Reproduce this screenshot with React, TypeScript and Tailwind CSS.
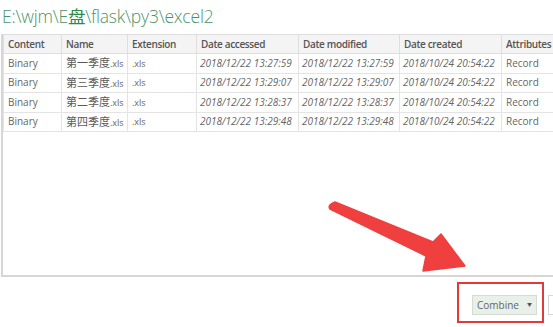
import React from "react";

const rows = [
  ["第一季度", "2018/12/22 13:27:59"],
  ["第三季度", "2018/12/22 13:29:07"],
  ["第二季度", "2018/12/22 13:28:37"],
  ["第四季度", "2018/12/22 13:29:48"],
];

const font = { fontFamily: '"Open Sans", "Noto Sans CJK SC", sans-serif' };

export default function App() {
  return (
    <div className="relative w-[553px] h-[327px] bg-white overflow-hidden" style={font}>
      <div className="h-[34px] pl-[2px] pt-[4px] text-[17.5px] font-light leading-[24px] text-[#4b946a] tracking-[-0.2px] whitespace-nowrap">
        E:\wjm\E<span className="text-[#2f8a4a] font-normal">盘</span>\flask\py3\excel2
      </div>
      <div className="ml-[1px] h-[243px] border-l-2 border-b-2 border-[#d6d6d6] overflow-hidden">
        <table className="border-collapse table-fixed text-[10px] text-[#666] w-[580px]">
          <colgroup>
            <col className="w-[58px]" />
            <col className="w-[66px]" />
            <col className="w-[69px]" />
            <col className="w-[102px]" />
            <col className="w-[101px]" />
            <col className="w-[102px]" />
            <col className="w-[82px]" />
          </colgroup>
          <thead>
            <tr className="h-[19px] bg-[#f4f4f4] text-[#555] font-semibold tracking-[-0.35px]">
              {["Content", "Name", "Extension", "Date accessed", "Date modified", "Date created", "Attributes"].map((h) => (
                <td key={h} className="border border-[#dedede] px-[4px] py-0 whitespace-nowrap text-left leading-[18px]">
                  {h}
                </td>
              ))}
            </tr>
          </thead>
          <tbody>
            {rows.map(([n, d]) => (
              <tr key={n} className="h-[19.5px]">
                <td className="border border-[#e4e4e4] px-[4px] whitespace-nowrap">Binary</td>
                <td className="border border-[#e4e4e4] px-[4px] whitespace-nowrap">
                  <span className="text-[11px] text-[#5a5a5a]">{n}</span>
                  <span className="text-[9px]">.xls</span>
                </td>
                <td className="border border-[#e4e4e4] px-[4px] whitespace-nowrap text-[9px]">.xls</td>
                <td className="border border-[#e4e4e4] px-[3px] whitespace-nowrap italic">{d}</td>
                <td className="border border-[#e4e4e4] px-[3px] whitespace-nowrap italic">{d}</td>
                <td className="border border-[#e4e4e4] px-[3px] whitespace-nowrap italic">2018/10/24 20:54:22</td>
                <td className="border border-[#e4e4e4] px-[4px] whitespace-nowrap">Record</td>
              </tr>
            ))}
          </tbody>
        </table>
      </div>
      <div className="flex items-start mt-[5px] ml-[457px] gap-[4px]">
        <div className="border-2 border-[#e23a3c] pl-[13px] pr-[5px] pt-[11px] pb-[6px]">
          <div className="w-[65px] h-[20px] bg-[#e9f0ea] border border-[#d3dcd4] flex items-center justify-center gap-[8px] text-[10px] text-[#666]">
            <span>Combine</span>
            <span className="text-[5px] text-[#555]">▼</span>
          </div>
        </div>
        <div className="mt-[13px] w-[40px] h-[20px] border border-[#d8d8d8] bg-white shrink-0" />
      </div>
      <svg className="absolute left-0 top-0 pointer-events-none" width="553" height="327">
        <path
          d="M335 202 L433 242 L441 234 L465 266 L423 271 L426 256 L330 209 Q327 205 335 202 Z"
          fill="#ef3f3f"
          stroke="#ef3f3f"
          strokeWidth="1.5"
          strokeLinejoin="round"
        />
      </svg>
    </div>
  );
}
